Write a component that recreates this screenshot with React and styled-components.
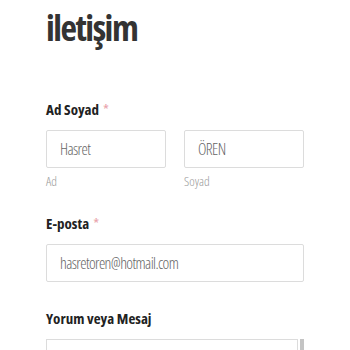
import styled, { createGlobalStyle } from "styled-components"

const Global = createGlobalStyle`
  body {
    margin: 0;
    background: #fff;
    font-family: "Open Sans", "Liberation Sans", sans-serif;
    font-stretch: 75%;
  }
`

const Page = styled.div`
  padding: 4px 46px 0 46px;
  width: 350px;
  height: 350px;
  box-sizing: border-box;
  overflow: hidden;
`

const Title = styled.h1`
  margin: 0;
  font-size: 36px;
  font-weight: 700;
  color: #333;
  line-height: 48px;
  letter-spacing: -1.5px;
`

const Label = styled.div`
  margin-top: ${p => p.$top}px;
  font-size: 15px;
  font-weight: 700;
  color: #222;
  line-height: 22px;
`

const Star = styled.span`
  color: #e8a0a8;
  font-weight: 400;
  margin-left: 4px;
`

const Row = styled.div`
  display: flex;
  gap: 18px;
  margin-top: 10px;
`

const Field = styled.div`
  flex: 1;
  display: flex;
  flex-direction: column;
`

const Input = styled.div`
  height: 38px;
  box-sizing: border-box;
  border: 1px solid #dcdcdc;
  border-radius: 2px;
  padding: 0 13px;
  display: flex;
  align-items: center;
  font-size: 16px;
  font-weight: 300;
  letter-spacing: -0.6px;
  color: #666;
`

const Help = styled.div`
  margin-top: 4px;
  font-size: 13px;
  line-height: 18px;
  color: #999;
  font-weight: 300;
`

const TextRow = styled.div`
  display: flex;
  gap: 2px;
  margin-top: 10px;
`

const TextBox = styled.div`
  flex: 1;
  height: 40px;
  border: 1px solid #dcdcdc;
  border-bottom: none;
`

const Thumb = styled.div`
  width: 4px;
  height: 40px;
  background: #c4c4c4;
`

export default function App() {
  return (
    <Page>
      <Global />
      <Title>iletişim</Title>
      <Label $top={46}>Ad Soyad<Star>*</Star></Label>
      <Row>
        <Field>
          <Input>Hasret</Input>
          <Help>Ad</Help>
        </Field>
        <Field>
          <Input>ÖREN</Input>
          <Help>Soyad</Help>
        </Field>
      </Row>
      <Label $top={22}>E-posta<Star>*</Star></Label>
      <Row>
        <Field>
          <Input>hasretoren@hotmail.com</Input>
        </Field>
      </Row>
      <Label $top={25}>Yorum veya Mesaj</Label>
      <TextRow>
        <TextBox />
        <Thumb />
      </TextRow>
    </Page>
  )
}
